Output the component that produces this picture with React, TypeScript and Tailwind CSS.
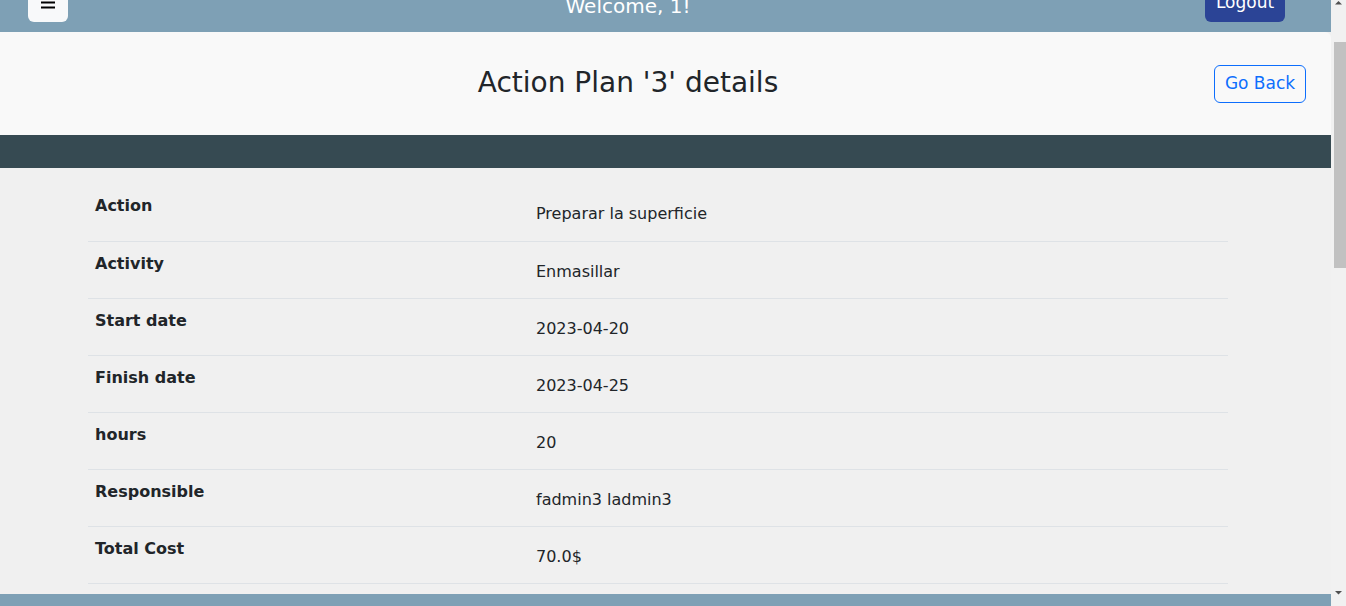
export default function App() {
  const rows = [
    { label: "Action", value: "Preparar la superficie" },
    { label: "Activity", value: "Enmasillar" },
    { label: "Start date", value: "2023-04-20" },
    { label: "Finish date", value: "2023-04-25" },
    { label: "hours", value: "20" },
    { label: "Responsible", value: "fadmin3 ladmin3" },
    { label: "Total Cost", value: "70.0$" },
  ];

  return (
    <div className="h-screen overflow-hidden flex bg-[#f0f0f0] text-[#212529] font-['DejaVu_Sans',sans-serif]">
      <div className="flex-1 min-w-0">
        {/* NAVBAR (page is scrolled, top is cut) */}
        <nav className="h-8 overflow-hidden bg-[#7ea0b5] flex items-end px-7 pb-[10px]">
          <button className="w-10 h-[38px] shrink-0 rounded-md bg-[#f8f9fa] flex items-center justify-center">
            <svg width="16" height="16" viewBox="0 0 16 16">
              <path d="M1 2.5h14M1 7.5h14M1 12.5h14" stroke="#000" strokeWidth="2" />
            </svg>
          </button>
          <div className="flex-1 text-center pr-[17px] text-white text-xl leading-[29px] self-end mb-[1px]">
            Welcome, 1!
          </div>
          <button className="h-[38px] w-20 mr-[18px] shrink-0 rounded-md bg-[#2b4496] text-white text-[17px]">
            Logout
          </button>
        </nav>

        {/* HEADER */}
        <header className="h-[103px] bg-[#f9f9f9] rounded-tr-md flex items-center pr-[25px]">
          <h1 className="flex-1 text-center pl-[42px] text-[28px] mt-[-1px]">Action Plan '3' details</h1>
          <button className="h-[38px] w-[92px] rounded-md border border-[#0d6efd] text-[#0d6efd] text-[17px] mt-[1px]">
            Go Back
          </button>
        </header>

        <div className="h-[33px] bg-[#364a52]"></div>

        {/* DETAILS TABLE */}
        <main className="pt-4 pb-[10px]">
          <table className="w-[1140px] ml-[88px]">
            <tbody>
              {rows.map((row) => (
                <tr key={row.label} className="h-[57px] border-b border-[#dee2e6]">
                  <th className="w-[440px] align-top text-left font-bold px-[7px] pt-[10px]">{row.label}</th>
                  <td className="align-middle px-2 pt-[4px]">{row.value}</td>
                </tr>
              ))}
            </tbody>
          </table>
        </main>

        <footer className="h-[946px] bg-[#7ea0b5]"></footer>
      </div>

      {/* scrollbar */}
      <div className="w-[15px] shrink-0 bg-[#f1f1f1] flex flex-col items-center">
        <svg width="15" height="17" viewBox="0 0 15 17" className="shrink-0">
          <path d="M4 4.5h7L7.5 1z" fill="#505050" />
        </svg>
        <div className="mt-[25px] ml-[4px] w-[13px] h-[226px] bg-[#c1c1c1]"></div>
        <div className="flex-1"></div>
        <svg width="15" height="17" viewBox="0 0 15 17" className="shrink-0">
          <path d="M4 2h7L7.5 5.5z" fill="#505050" />
        </svg>
      </div>
    </div>
  );
}
